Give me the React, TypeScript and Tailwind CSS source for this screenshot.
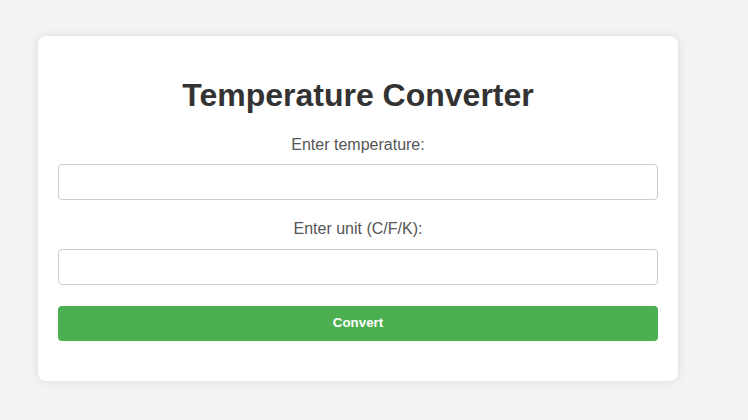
export default function App() {
  return (
    <div className="min-h-screen bg-[#f3f3f3] pt-[36px] pl-[38px] font-['Liberation_Sans',Arial,sans-serif]">
      <div className="w-[640px] rounded-[8px] bg-white p-[20px] shadow-[0_0_10px_rgba(0,0,0,0.1)]">
        <h1 className="my-[21.44px] text-center text-[32px] leading-[37px] font-bold text-[#333]">
          Temperature Converter
        </h1>
        <label className="mb-[10px] block text-center text-[16px] leading-[18.4px] text-[#555]">
          Enter temperature:
        </label>
        <input
          type="text"
          className="mb-[20px] block h-[36px] w-full rounded-[4px] border border-[#ccc] px-[8px] text-[16px]"
        />
        <label className="mb-[10px] block text-center text-[16px] leading-[18.4px] text-[#555]">
          Enter unit (C/F/K):
        </label>
        <input
          type="text"
          className="mb-[21px] block h-[36px] w-full rounded-[4px] border border-[#ccc] px-[8px] text-[16px]"
        />
        <button className="mb-[20px] block h-[35px] w-full rounded-[4px] bg-[#4caf50] text-[13.33px] font-bold text-white">
          Convert
        </button>
      </div>
    </div>
  );
}
